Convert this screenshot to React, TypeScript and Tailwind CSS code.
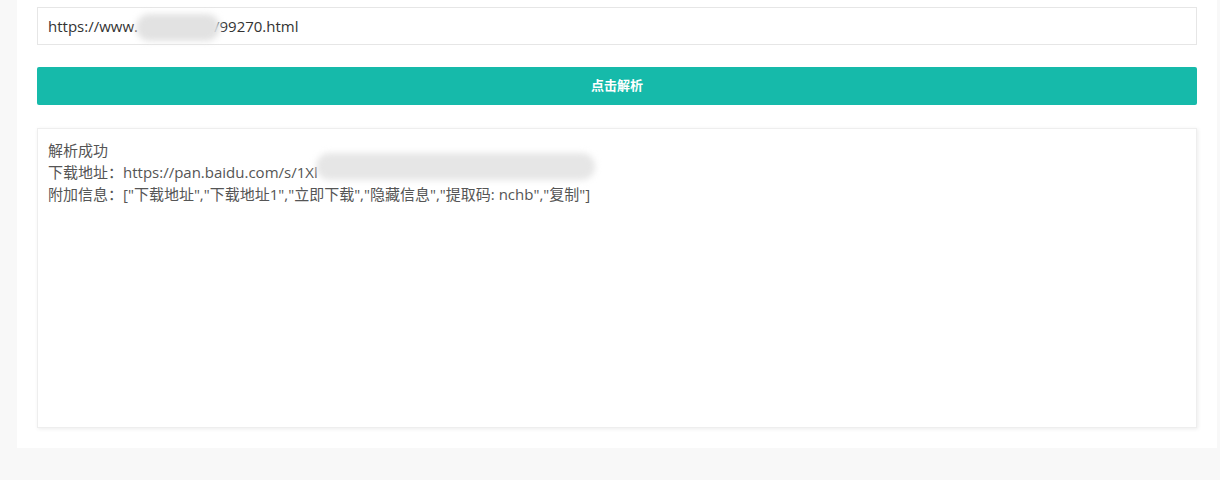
export default function App() {
  return (
    <div className="min-h-[480px] bg-[#f8f8f8] pl-[17px] pr-[3px]" style={{ fontFamily: '"Open Sans", "Noto Sans CJK SC", sans-serif' }}>
      <div className="bg-white px-5 pt-[7px] pb-5">
        {/* 链接输入 */}
        <div className="relative h-[38px] border border-[#e6e6e6] bg-white px-[10px] flex items-center text-[15px] text-[#333]">
          <span>https://www.</span>
          <span className="inline-block w-[76px]" />
          <span>/99270.html</span>
          <div className="absolute left-[98px] top-[6px] h-[27px] w-[84px] rounded-full bg-[#e2e2e2] blur-[3px]" />
        </div>

        <button className="mt-[22px] h-[38px] w-full rounded-[2px] bg-[#16baaa] text-[13px] font-semibold text-white">
          点击解析
        </button>

        {/* 解析结果 */}
        <div className="relative mt-[23px] h-[300px] border border-[#eee] bg-white px-[10px] pt-[10px] text-[15px] leading-[22px] text-[#555] shadow-[1px_1px_4px_rgba(0,0,0,0.08)]">
          <div>解析成功</div>
          <div>下载地址：https://pan.baidu.com/s/1Xl</div>
          <div>附加信息：["下载地址","下载地址1","立即下载","隐藏信息","提取码: nchb","复制"]</div>
          <div className="absolute left-[278px] top-[24px] h-[27px] w-[279px] rounded-full bg-[#e6e6e6] blur-[3px]" />
        </div>
      </div>
    </div>
  );
}
